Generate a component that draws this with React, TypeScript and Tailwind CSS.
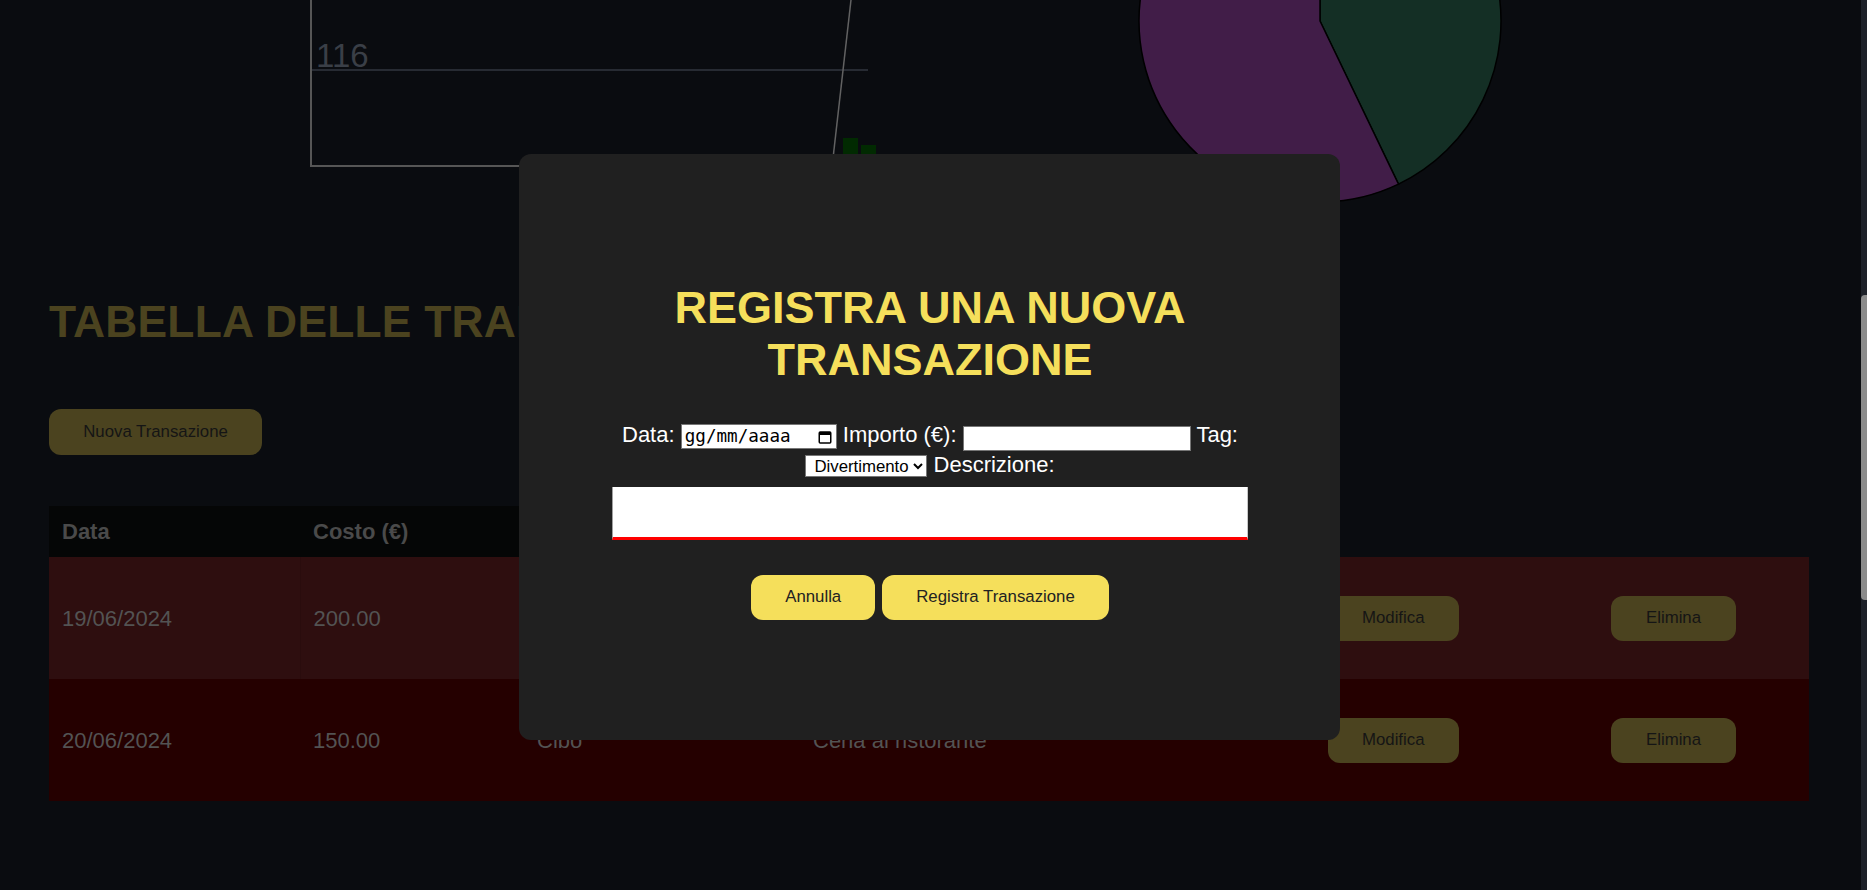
import React from 'react';

const rows = [
  { data: '19/06/2024', costo: '200.00', tag: 'Divertimento', descrizione: 'Concerto', bg: 'bg-[#2e0e0f]' },
  { data: '20/06/2024', costo: '150.00', tag: 'Cibo', descrizione: 'Cena al ristorante', bg: 'bg-[#250000]' },
];

// chart fragments peeking above the table (page is scrolled down)
const Charts = () => (
  <svg width="1861" height="210" className="block">
    <line x1="311" y1="70" x2="868" y2="70" stroke="#272b33" strokeWidth="2" />
    <text x="316" y="67" fontSize="33" fill="#3a3f47" fontFamily="Liberation Sans, Arial, sans-serif">
      116
    </text>
    <line x1="311" y1="0" x2="311" y2="167" stroke="#565656" strokeWidth="2" />
    <line x1="310" y1="166" x2="869" y2="166" stroke="#565656" strokeWidth="2" />
    <rect x="843" y="138" width="15" height="40" fill="#012a01" />
    <rect x="861" y="145" width="15" height="33" fill="#012a01" />
    <line x1="851" y1="0" x2="826" y2="220" stroke="#626262" strokeWidth="1.5" />
    <path d="M1320 21 L1320 -160 A181 181 0 0 1 1398.5 184.1 Z" fill="#142f25" stroke="#000" strokeWidth="1.5" />
    <path d="M1320 21 L1398.5 184.1 A181 181 0 1 1 1320 -160 Z" fill="#411d48" stroke="#000" strokeWidth="1.5" />
  </svg>
);

const CalendarIcon = () => (
  <svg width="14" height="14" viewBox="0 0 14 14" className="shrink-0">
    <rect x="1.25" y="2" width="11.5" height="11" rx="1" fill="none" stroke="#000" strokeWidth="1.5" />
    <rect x="1.25" y="2" width="11.5" height="3" fill="#000" />
  </svg>
);

export default function App() {
  return (
    <div className="flex h-[890px] w-full overflow-hidden bg-[#0a0c10] font-['Liberation_Sans',Arial,sans-serif]">
      <main className="min-w-0 flex-1">
        <Charts />
        <section className="pl-[49px]">
          <h1 className="mt-[87px] text-[44.4px] font-bold leading-[normal] tracking-[0.2px] text-[#4b431f]">TABELLA DELLE TRANSAZIONI</h1>
          <button className="mt-[62px] flex h-[46px] w-[213px] items-center justify-center rounded-[12px] bg-[#4b431f] text-[16.8px] text-[#151515]">
            Nuova Transazione
          </button>
          <table className="mt-[51px] w-[1760px] table-fixed border-collapse">
            <colgroup>
              <col className="w-[251px]" />
              <col className="w-[224px]" />
              <col className="w-[276px]" />
              <col className="w-[515px]" />
              <col className="w-[283px]" />
              <col className="w-[211px]" />
            </colgroup>
            <thead>
              <tr className="h-[51px] text-left text-[22px] font-bold text-[#4a4a4a]">
                <th className="bg-[#050606] px-[13px]">Data</th>
                <th className="bg-[#050606] px-[13px]">Costo (€)</th>
                <th className="bg-[#050606] px-[13px]">Tag</th>
                <th className="bg-[#050606] px-[13px]">Descrizione</th>
                <th />
                <th />
              </tr>
            </thead>
            <tbody>
              {rows.map((r, i) => (
                <tr key={r.data} className={`h-[122px] text-[22px] text-[#535353] ${r.bg}`}>
                  <td className={`px-[13px] ${i === 0 ? 'border-r border-[#2a0c0d]' : ''}`}>{r.data}</td>
                  <td className="px-[13px]">{r.costo}</td>
                  <td className="px-[13px]">{r.tag}</td>
                  <td className="px-[13px]">{r.descrizione}</td>
                  <td className="px-[13px]">
                    <button className="h-[45px] rounded-[12px] bg-[#4b431f] px-[34px] text-[16.8px] text-[#151515]">Modifica</button>
                  </td>
                  <td className="px-[13px]">
                    <button className="h-[45px] rounded-[12px] bg-[#4b431f] px-[35px] text-[16.8px] text-[#151515]">Elimina</button>
                  </td>
                </tr>
              ))}
            </tbody>
          </table>
        </section>
      </main>

      {/* scrollbar */}
      <div className="w-[6px] shrink-0 bg-[#1d2129] pt-[295px]">
        <div className="h-[305px] rounded-l-[4px] bg-[#8b8b8b]" />
      </div>

      {/* modal */}
      <div className="fixed inset-0 flex items-center justify-center pr-[8px] pt-[4px]">
        <div className="h-[586px] w-[821px] rounded-[12px] bg-[#202020] pl-[93px] pr-[92px] pt-[128px] text-center">
          <h2 className="text-[45px] font-bold leading-[normal] text-[#f5df5b]">REGISTRA UNA NUOVA TRANSAZIONE</h2>
          <form onSubmit={(e) => e.preventDefault()}>
            <div className="mt-[35px] text-[22px] leading-[28px] text-white">
              Data:{' '}
              <span className="inline-flex h-[25px] w-[156px] items-center justify-between border border-[#767676] bg-white pl-[3px] pr-[4px] align-baseline">
                <span className="font-['DejaVu_Sans_Mono',monospace] text-[17.6px] leading-none text-black">gg/mm/aaaa</span>
                <CalendarIcon />
              </span>{' '}
              Importo (€):{' '}
              <input type="text" className="h-[25px] w-[228px] border border-[#767676] bg-white text-[13.33px] text-black align-baseline" />{' '}
              Tag:{' '}
              <select
                defaultValue="Divertimento"
                className="h-[22px] w-[122px] border border-[#767676] bg-white pl-[4px] text-[16.8px] leading-[normal] text-black align-baseline"
              >
                <option>Divertimento</option>
                <option>Cibo</option>
                <option>Trasporti</option>
              </select>{' '}
              Descrizione:
            </div>
            <textarea className="mt-[8px] block h-[53px] w-full resize-none border-r border-b-[3px] border-l border-t-0 border-l-[#a0a0a0] border-r-[#c8c8c8] border-b-[#ff0000] bg-white" />
            <div className="mt-[35px] flex justify-center gap-[7px]">
              <button type="button" className="h-[45px] rounded-[12px] bg-[#f5df5b] px-[34px] text-[16.8px] text-[#222]">
                Annulla
              </button>
              <button type="submit" className="h-[45px] rounded-[12px] bg-[#f5df5b] px-[34px] text-[16.8px] text-[#222]">
                Registra Transazione
              </button>
            </div>
          </form>
        </div>
      </div>
    </div>
  );
}
